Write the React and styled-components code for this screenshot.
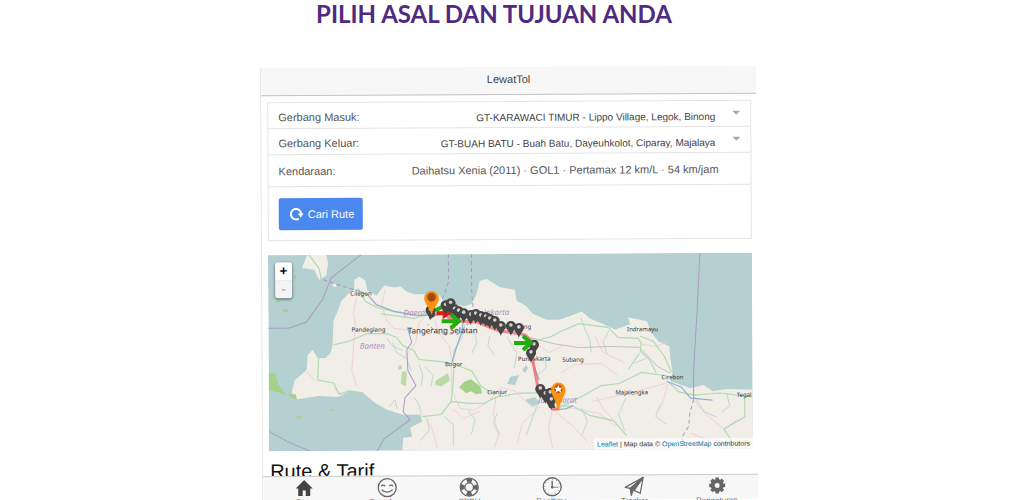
import { useState } from "react";
import styled, { createGlobalStyle } from "styled-components";

const selectOptions = {
    masuk: ["GT-KARAWACI TIMUR - Lippo Village, Legok, Binong"],
    keluar: ["GT-BUAH BATU - Buah Batu, Dayeuhkolot, Ciparay, Majalaya"],
};

const pins = [
    [162, 56], [177, 51], [182, 49], [186, 55], [190, 57], [195, 59],
    [202, 61], [207, 60], [212, 62], [217, 63], [221, 65], [226, 67], [232, 72],
    [242, 72], [250, 74], [265, 91], [262, 99], [271, 135], [276, 140], [281, 139], [282, 146],
];

const towns = [
    ["Cilegon", 82, 41, 6], ["Pandeglang", 83, 77, 6], ["Tangerang Selatan", 139, 79, 8],
    ["Bogor", 176, 112, 6], ["Cianjur", 218, 140, 6], ["Subang", 293, 108, 6],
    ["Indramayu", 358, 78, 6], ["Cirebon", 392, 126, 6], ["Majalengka", 346, 141, 6],
    ["Tegal", 467, 144, 6], ["Purwakarta", 249, 107, 6], ["Karawang", 234, 75, 6],
];

const regions = [["Daerah", 135, 61], ["Banten", 91, 94], ["Jakarta", 215, 61], ["Jawa Barat", 269, 149]];

function Map() {
    return (
        <MapBox>
            <MapSvg viewBox="0 0 483 196" preserveAspectRatio="xMidYMid slice">
                <rect width="483" height="196" fill="#b5d0d0" />
                <path fill="#f1eee8" d="M39 0L34 13L46 15L51 25L58 21L60 8L58 0Z" />
                <path fill="#f1eee8" d="M64 90L65 66L69 57L73 46L80 39L86 35L86 25L91 22L97 26L99 36L108 41L116 31L126 33L132 32L138 37L146 40L156 40L163 42L170 40L175 47L184 50L196 52L203 50L208 40L211 27L218 25L231 33L246 36L248 47L257 52L264 60L278 66L290 66L300 63L313 58L321 65L333 70L346 76L361 71L359 64L378 68L381 78L389 88L400 93L401 105L403 120L401 128L410 131L421 135L434 132L443 138L458 136L483 137V196H133L134 183L143 182L141 173L153 167L151 160L134 160L118 155L106 148L94 138L81 136L69 142L50 141L28 144L23 137L26 125L38 115L39 100L44 95L49 103L57 103L62 98Z" />
                <g fill="#a5d18b">
                    <path d="M0 119L7 118L9 128L17 140L10 137L0 135ZM19 139L27 139L28 144L21 142Z" />
                    <path d="M190 133L196 127L202 125L211 132L213 139L207 140L202 137L197 139Z" />
                    <path opacity=".7" d="M167 126L179 119L181 126L172 132L166 130Z" />
                    <path opacity=".7" d="M133 117H138L137 132L132 129ZM130 111h3v4h-4z" />
                    <path d="M14 54h5l1 3h-5zM26 20h2v4h-2zM8 46h3v2h-3zM28 161h5v2h-6zM59 156l5-2v2z" />
                </g>
                <g fill="#b5d0d0">
                    <path d="M241 123L250 121L246 131L238 130ZM256 146L265 143L271 148L263 153Z" />
                    <path d="M253 116l4-5 2 3-3 5z" />
                </g>
                <path fill="#f1eee8" d="M64 29h4v3h-3z" />
                <g fill="none" stroke="#b9d6d2" strokeWidth=".9">
                    <path d="M124 88L128 98L138 104L142 116M118 83L123 91L134 96M150 110L154 120L152 132M145 143L150 150L152 160M156 112L164 121L162 132M120 152L126 145L128 154" />
                    <path d="M196 70L193 84L185 96L184 109M206 79L208 88L203 99M221 82L219 91L225 101M238 83L248 99L245 114M276 107L277 114L268 121M312 64L316 76L321 87L322 99M340 77L334 88L338 101M369 101L359 116L371 99M377 105L364 110" />
                    <path d="M228 159L224 169L231 181M268 151L263 164L257 181M312 154L318 168L312 182M356 145L349 161L355 177M425 144L435 159L447 164M457 140L460 153L452 159M391 151L386 163L397 171M199 157L206 165L202 180M175 162L184 170L184 191M158 164L160 176L151 186" />
                </g>
                <g fill="none" stroke="#efcdd2" strokeWidth=".9">
                    <path d="M117 35L113 51L118 65L125 74L145 76M88 43L85 58L87 71L85 90L83 116L88 132M37 116L47 126M65 133L75 142M159 58L150 70L147 88L134 105M166 66L171 80L180 91L183 106" />
                    <path d="M183 113L182 135L191 154L205 156L219 147L232 133L246 137L258 149L271 154M227 142L224 161L229 181L225 193M155 161L163 174L168 193M184 155L194 164L211 157" />
                    <path d="M268 155L253 169L248 188M283 156L279 174L283 194M285 157L303 172L318 188M266 89L280 99L293 92M292 119L305 111L332 110L348 122M326 83L334 99L355 109M372 91L386 93L397 89" />
                    <path d="M396 130L371 137L345 143L322 148M398 131L394 147L387 160M424 147L437 162L454 176L467 167M421 180L438 187L459 188M301 154L330 160L347 173M327 143L335 157L343 165" />
                </g>
                <path fill="none" stroke="#b9adab" strokeWidth=".7" d="M262 84L285 90L310 94L340 93L370 94L388 113L401 120" />
                <g fill="none" stroke="#b0dcae" strokeWidth="1.2">
                    <path d="M41 0L51 14L53 24M90 34L97 47L109 53L125 57M65 90L82 86L98 79L118 79L128 83M50 102L49 125L65 128L70 139L81 136L94 138M112 59L145 64L164 59" />
                    <path d="M128 83L134 91L145 96L150 105L170 107L183 109M184 109L203 117L212 132L223 139M185 111L184 131L182 147L172 160L153 162M182 147L200 149L215 149L227 143L251 139L269 139" />
                    <path d="M265 87L282 83L291 78L310 70L339 74L349 84L369 85L372 90L371 98L380 106L387 120M371 83L384 88L395 103L402 119" />
                    <path d="M289 154L310 144L332 132L350 130L372 119L394 122M286 152L303 152L321 162L344 167L357 182M398 128L410 139L425 142L450 140L483 144M475 143L475 164L454 176L462 188L478 188" />
                </g>
                <g fill="none" stroke="#99add3" strokeWidth="1.3">
                    <path d="M87 35L99 40L108 50L126 57L148 61L163 61M195 62L193 78L187 95L183 108M264 94L264 110L270 126M283 156L296 155L304 152M397 128L412 134L421 145L443 147" />
                </g>
                <g fill="none" stroke="#a99bc4" strokeWidth="1">
                    <path d="M93 0L63 23L54 45L38 67L21 73H0M0 176L18 186L41 196M108 196L115 184L141 165L134 157L136 143L147 131L139 116L138 95L143 88L139 73" />
                    <path d="M431 0L428 57L424 119L424 146" />
                    <path strokeDasharray="4 3" d="M55 25L73 31L86 35M180 0V28L174 45M203 0V35L205 64L189 80L169 79L159 70M424 146L420 161L419 173L412 184L418 196" />
                </g>
                {regions.map(([name, x, y]) => (
                    <RegionName key={name} x={x} y={y}>{name}</RegionName>
                ))}
                {towns.map(([name, x, y, size]) => (
                    <TownName key={name} x={x} y={y} $size={size}>{name}</TownName>
                ))}
                <path fill="none" stroke="#f0696f" strokeOpacity=".8" strokeWidth="3" strokeLinejoin="round" d="M161 62L174 58L181 64L193 67L208 68L231 77L246 79L256 81L265 89L263 103L268 130L274 141L283 155H290" />
                <path fill="none" stroke="#24ab12" strokeWidth="4" d="M167 56L177 51" />
                <path fill="#454545" d="M158 55h9l-1 7-5 3zM174 48l9-1 8 10-2 8-9-5zM200 58l10 0 13 8-3 6-12-5-8-2zM273 139l8-1 5 16h-6z" />
                <path fill="#e01b12" d="M168 57h6v-4l9 6-9 6v-4h-6z" />
                {pins.map(([x, y]) => (
                    <g key={`${x}-${y}`} transform={`translate(${x} ${y})`}>
                        <path fill="#454545" d="M0 10C-1 6-5 3-5 0A5 5 0 0 1 5 0C5 3 1 6 0 10Z" />
                        <circle r="1.800" cy="-1" fill="#d5d1ce" />
                    </g>
                ))}
                <g fill="none" stroke="#24ab12" strokeWidth="4">
                    <path d="M173 67H189M182 60L190 67L182 74" />
                    <path d="M245 89H261M254 82L262 89L254 96" />
                </g>
                <g stroke="#f08a10" strokeWidth=".5">
                    <path fill="#fb930f" d="M163 60C161 53 156 49 156 44A7 7 0 0 1 170 44C170 49 165 53 163 60Z" />
                    <circle cx="163" cy="43" r="4.500" fill="#a64611" />
                    <path fill="#fb930f" d="M289 156C287 147 282 141 282 136A7 7 0 0 1 296 136C296 141 291 147 289 156Z" />
                    <circle cx="289" cy="135" r="4.500" fill="#bb5613" />
                </g>
                <path fill="#fff" d="M289 131l1 3h3l-2 2 1 3-3-2-3 2 1-3-2-2h3z" />
            </MapSvg>
            <ZoomControl>
                <ZoomButton type="button" aria-label="Zoom in">+</ZoomButton>
                <ZoomButton type="button" aria-label="Zoom out" $off>-</ZoomButton>
            </ZoomControl>
            <Attribution>
                <a href="#leaflet">Leaflet</a> | Map data © <a href="#osm">OpenStreetMap</a> contributors
            </Attribution>
        </MapBox>
    );
}

function HomeIcon() {
    return (
        <TabIcon viewBox="0 0 20 20" fill="#444">
            <path d="M10 2L1.500 10.500H4V18H8.500V12.500H11.500V18H16V10.500H18.500Z" />
        </TabIcon>
    );
}

function SmileIcon() {
    return (
        <TabIcon viewBox="0 0 20 20" fill="none" stroke="#666" strokeWidth="1.300">
            <circle cx="10" cy="10" r="9" />
            <path d="M4 8.500q2-2 4 0M12 8.500q2-2 4 0M4.500 12q5.500 5 11 0" />
        </TabIcon>
    );
}

function LifebuoyIcon() {
    return (
        <TabIcon viewBox="0 0 20 20" fill="none" stroke="#666">
            <circle cx="10" cy="10" r="9" strokeWidth="1.300" />
            <circle cx="10" cy="10" r="4.300" strokeWidth="1.300" />
            <circle cx="10" cy="10" r="6.600" strokeWidth="4" strokeDasharray="5 5.370" strokeDashoffset="2.500" />
        </TabIcon>
    );
}

function ClockIcon() {
    return (
        <TabIcon viewBox="0 0 20 20" fill="none" stroke="#666" strokeWidth="1.300">
            <circle cx="10" cy="10" r="9" />
            <path d="M10 4v6.500" />
            <path strokeWidth=".8" d="M10 10.500h6" />
            <circle cx="10" cy="10" r="7.500" strokeWidth="1" strokeDasharray=".6 3.330" />
            <circle cx="10" cy="10.500" r="1.300" fill="#666" stroke="none" />
        </TabIcon>
    );
}

function PlaneIcon() {
    return (
        <TabIcon viewBox="0 0 20 20" fill="none" stroke="#666" strokeWidth="1.200" strokeLinejoin="round">
            <path d="M1 11L19 1L16 17L10 14L19 1L6 12Z" />
            <path fill="#666" d="M6 12L19 1L9 14L7 19Z" />
        </TabIcon>
    );
}

function GearIcon() {
    return (
        <TabIcon viewBox="0 0 20 20" fill="none" stroke="#666">
            <circle cx="10" cy="9.500" r="4.500" strokeWidth="4" />
            <path strokeWidth="3.500" d="M10 1.500v3M10 14.500v3M2 9.500h3M15 9.500h3M4.300 3.800l2 2M13.700 13.200l2 2M4.300 15.200l2-2M13.700 5.800l2-2" />
        </TabIcon>
    );
}

const tabs = [
    ["Rute", HomeIcon],
    ["Rest Area", SmileIcon],
    ["SPBU", LifebuoyIcon],
    ["Realtime", ClockIcon],
    ["Tracker", PlaneIcon],
    ["Pengaturan", GearIcon],
];

export default function App() {
    const [active, setActive] = useState("Rute");
    return (
        <Page>
            <GlobalStyle />
            <Title>PILIH ASAL DAN TUJUAN ANDA</Title>
            <Screen>
                <Header>LewatTol</Header>
                <Content>
                    <Form onSubmit={e => e.preventDefault()}>
                        <Row>
                            <label htmlFor="masuk">Gerbang Masuk:</label>
                            <SelectHolder>
                                <Select id="masuk">
                                    {selectOptions.masuk.map(o => <option key={o}>{o}</option>)}
                                </Select>
                                <Arrow />
                            </SelectHolder>
                        </Row>
                        <Row>
                            <label htmlFor="keluar">Gerbang Keluar:</label>
                            <SelectHolder>
                                <Select id="keluar">
                                    {selectOptions.keluar.map(o => <option key={o}>{o}</option>)}
                                </Select>
                                <Arrow />
                            </SelectHolder>
                        </Row>
                        <Row $tall>
                            <span>Kendaraan:</span>
                            <Vehicle>Daihatsu Xenia (2011) · GOL1 · Pertamax 12 km/L · 54 km/jam</Vehicle>
                        </Row>
                        <Actions>
                            <SearchButton>
                                <svg width="14" height="14" viewBox="0 0 14 14" fill="none" stroke="#fff" strokeWidth="2">
                                    <path d="M9 11.500A5.200 5.200 0 1 1 11.500 7" />
                                    <path fill="#fff" stroke="none" d="M8 6.500h6l-3 4z" />
                                </svg>
                                Cari Rute
                            </SearchButton>
                        </Actions>
                    </Form>
                    <Map />
                    <Result>Rute &amp; Tarif</Result>
                </Content>
                <TabBar>
                    {tabs.map(([name, Icon]) => (
                        <Tab key={name} type="button" $active={active === name} onClick={() => setActive(name)}>
                            <Icon />
                            {name}
                        </Tab>
                    ))}
                </TabBar>
            </Screen>
        </Page>
    );
}

const GlobalStyle = createGlobalStyle`
* {
    box-sizing: border-box;
}
body {
    margin: 0;
    background-color: #fff;
    overflow: hidden;
    font-family: "Liberation Sans", Arial, sans-serif;
}
button, select {
    font-family: inherit;
}
`
const Page = styled.main`
display: flex;
flex-direction: column;
align-items: center;
height: 100vh;
padding-right: 8px;
overflow: hidden;
`
const Title = styled.h1`
margin: 0;
padding-right: 28px;
height: 67px;
flex-shrink: 0;
font-family: Lato, "Liberation Sans", sans-serif;
font-size: 24px;
line-height: 28px;
font-weight: 700;
color: #4f2a80;
`
const Screen = styled.section`
display: flex;
flex-direction: column;
flex: 1;
min-height: 0;
width: 100%;
max-width: 496px;
border-left: 1px solid #e6e6e6;
transform: rotate(-0.3deg);
transform-origin: top center;
`
const Header = styled.header`
flex-shrink: 0;
padding: 5px 0 8px;
background-color: #f7f7f7;
border-bottom: 1px solid #c4c4c4;
text-align: center;
font-size: 11px;
line-height: 14px;
color: #444;
`
const Content = styled.div`
flex: 1;
min-height: 0;
overflow: hidden;
padding: 6px 5px 0 6px;
`
const Form = styled.form`
border: 1px solid #e4e4e4;
font-size: 11px;
color: #555;
`
const Row = styled.div`
display: flex;
align-items: center;
justify-content: space-between;
height: ${props => props.$tall ? "32px" : "26px"};
padding: ${props => props.$tall ? "0 10px" : "3px 10px 0"};
border-bottom: 1px solid #e4e4e4;
`
const SelectHolder = styled.div`
display: flex;
align-items: center;
flex: 1;
gap: 17px;
`
const Select = styled.select`
flex: 1;
appearance: none;
border: none;
background: none;
padding: 3px 0 0;
text-align: right;
text-align-last: right;
font-size: 10px;
color: #444;
`
const Arrow = styled.span`
border: 4px solid transparent;
border-top-color: #aaa;
border-bottom: none;
margin-bottom: 4px;
`
const Vehicle = styled.span`
padding-right: 22px;
`
const Actions = styled.div`
padding: 11px 10px 10px;
`
const SearchButton = styled.button`
display: flex;
align-items: center;
gap: 4px;
height: 32px;
padding: 0 9px 0 11px;
border: none;
border-radius: 2px;
background-color: #4a87ee;
color: #fff;
font-size: 11px;
cursor: pointer;
`
const MapBox = styled.div`
position: relative;
margin-top: 14px;
`
const MapSvg = styled.svg`
display: block;
width: 100%;
height: 196px;
`
const TownName = styled.text`
font-family: "Noto Sans", sans-serif;
font-size: ${props => props.$size}px;
fill: #333;
`
const RegionName = styled.text`
font-family: "Noto Sans", sans-serif;
font-size: 8px;
font-style: italic;
fill: #b08cc4;
`
const ZoomControl = styled.div`
position: absolute;
top: 7px;
left: 7px;
display: flex;
flex-direction: column;
border-radius: 3px;
box-shadow: 0 1px 3px rgba(0, 0, 0, 0.6);
overflow: hidden;
`
const ZoomButton = styled.button`
width: 17px;
height: 18px;
padding: 0;
border: none;
background-color: ${props => props.$off ? "#f4f4f4" : "#fff"};
color: ${props => props.$off ? "#bbb" : "#000"};
font-size: 13px;
font-weight: 700;
line-height: 16px;
`
const Attribution = styled.div`
position: absolute;
right: 0;
bottom: 0;
padding: 1px 3px;
background-color: rgba(255, 255, 255, 0.7);
font-size: 7px;
line-height: 9px;
color: #333;
a {
    color: #0078a8;
    text-decoration: none;
}
`
const Result = styled.h2`
margin: 8px 0 0 1px;
font-size: 20px;
line-height: 24px;
font-weight: 400;
color: #111;
`
const TabBar = styled.nav`
display: grid;
grid-template-columns: repeat(6, 1fr);
flex-shrink: 0;
height: 25px;
background-color: #f7f7f7;
border-top: 1px solid #ccc;
`
const Tab = styled.button`
display: flex;
flex-direction: column;
align-items: center;
padding: 1px 0 0;
border: none;
background: none;
color: ${props => props.$active ? "#444" : "#666"};
font-size: 8px;
line-height: 10px;
`
const TabIcon = styled.svg`
display: block;
width: 20px;
height: 20px;
flex-shrink: 0;
`
